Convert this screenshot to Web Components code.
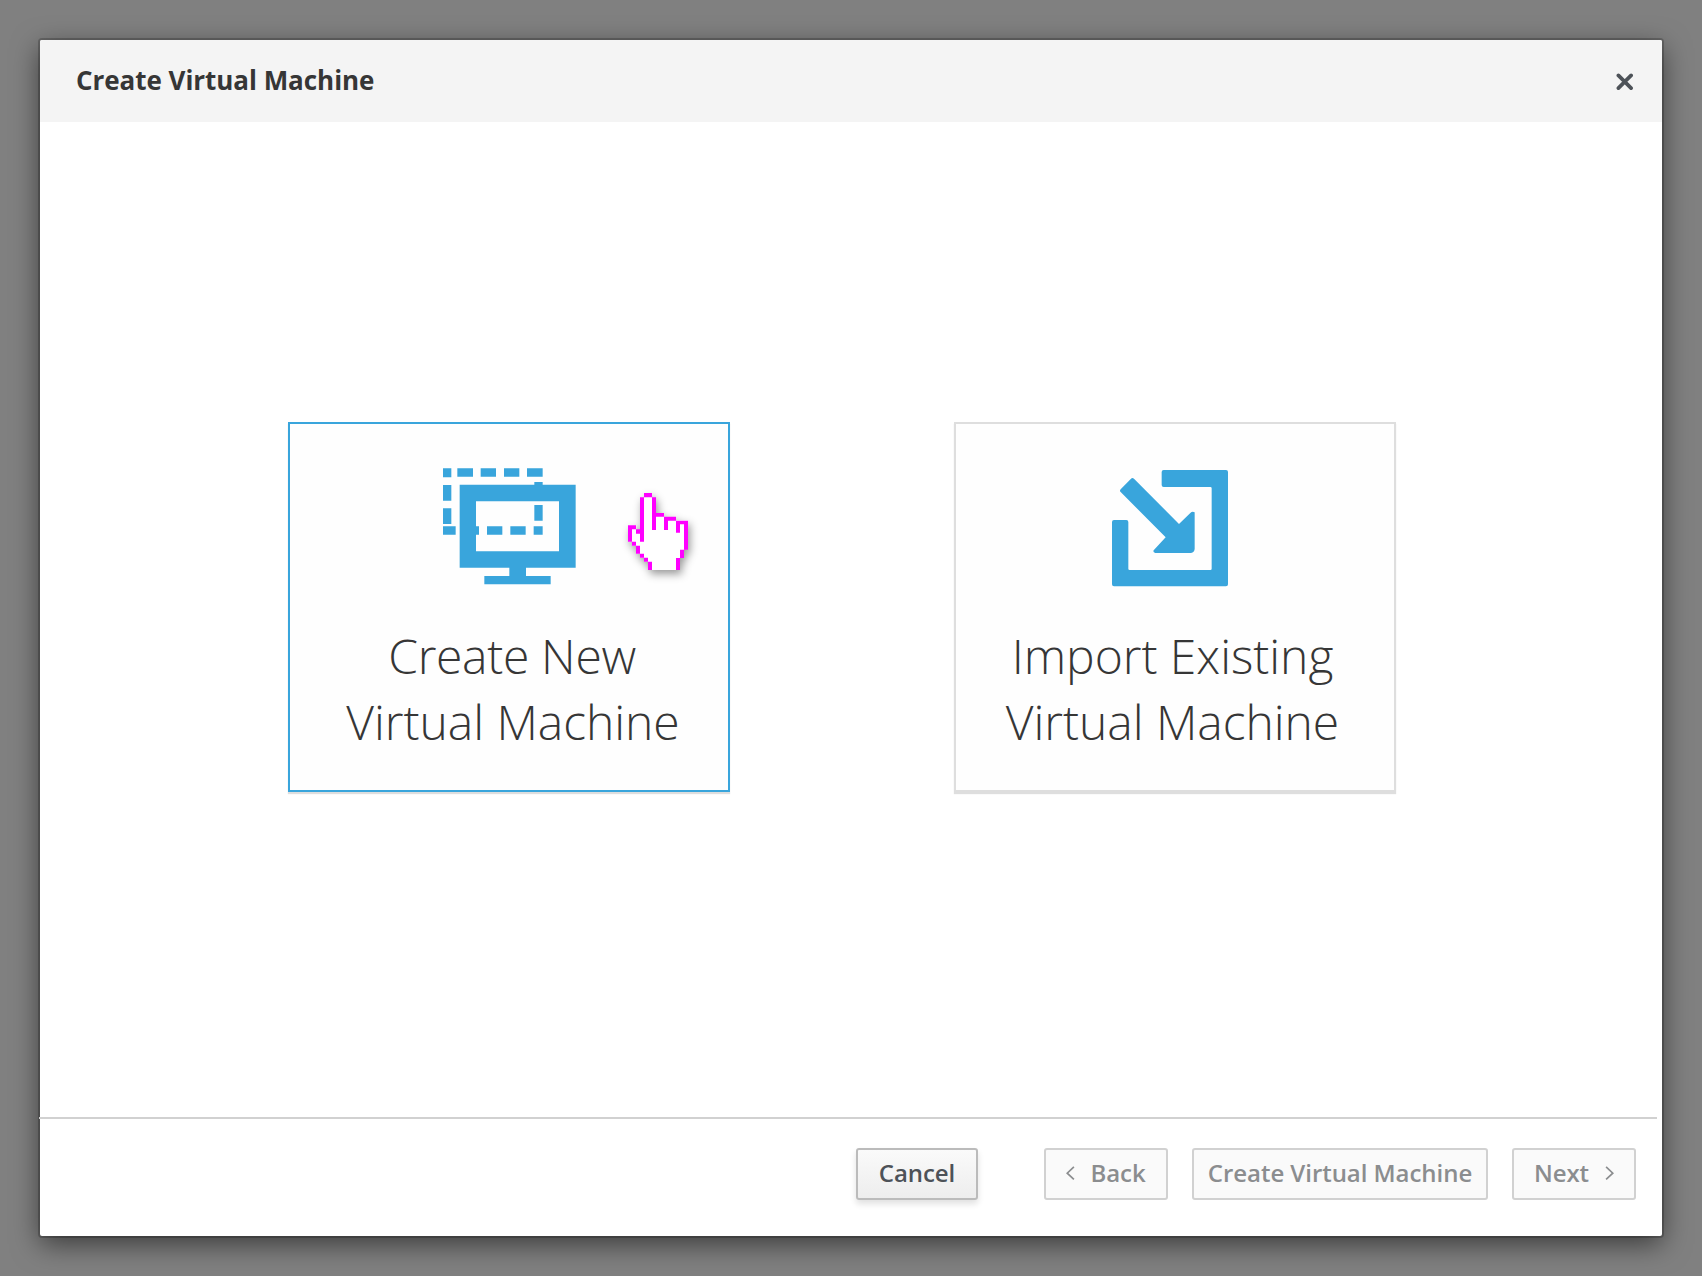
<!DOCTYPE html>
<html lang="en">
<head>
<meta charset="utf-8">
<title>Create Virtual Machine</title>
<style>
html,body{margin:0;height:100%}
body{background:#808080;font-family:"Open Sans","Noto Sans",sans-serif;color:#363636;overflow:hidden}
.tight{letter-spacing:-.32px;margin-right:2px}
</style>
</head>
<body>
<vm-dialog>
  <span slot="title">Create Virtual Machine</span>
  <choice-card class="new" selected>
    <icon-monitor slot="icon"></icon-monitor>
    <span class="tight">Create New</span><span>Virtual Machine</span>
    <hand-cursor slot="overlay"></hand-cursor>
  </choice-card>
  <choice-card class="import">
    <icon-import slot="icon"></icon-import>
    <span>Import Existing</span><span>Virtual Machine</span>
  </choice-card>
  <wizard-button slot="footer" style="--w:122px;--gap:66px">Cancel</wizard-button>
  <wizard-button slot="footer" disabled style="--w:124px;--gap:24px"><chevron-icon></chevron-icon>Back</wizard-button>
  <wizard-button slot="footer" disabled style="--w:296px;--gap:24px">Create Virtual Machine</wizard-button>
  <wizard-button slot="footer" disabled style="--w:124px;--gap:0px">Next<chevron-icon next></chevron-icon></wizard-button>
</vm-dialog>
<script>
const define = (name, html) => customElements.define(name, class extends HTMLElement {
  constructor() {
    super();
    const t = document.createElement('template');
    t.innerHTML = html;
    this.attachShadow({mode: 'open'}).appendChild(t.content.cloneNode(true));
  }
});

define('close-icon', `<style>:host{display:block;padding-top:2px}svg{display:block}</style>
<svg width="18" height="18" viewBox="0 0 18 18"><path d="M2.4 2.4 15.1 15.1M15.1 2.4 2.4 15.1" stroke="#4d5258" stroke-width="3.7" stroke-linecap="round"/></svg>`);

define('chevron-icon', `<style>:host{display:block;margin-right:15px}:host([next]){margin:0 0 0 16px;transform:scaleX(-1)}svg{display:block}</style>
<svg width="9" height="14" viewBox="0 0 9 14"><path d="M7.9 .8 1.2 7.2 7.9 13.4" fill="none" stroke="#8b8d8f" stroke-width="1.7"/></svg>`);

define('icon-monitor', `<style>:host{display:block}svg{display:block}</style>
<svg width="160" height="140" viewBox="0 0 480 420" fill="#39a5dc">
<path fill-rule="evenodd" d="M89 89H437V338H288V363H362V388H163V363H238V338H89ZM138 139V289H387V139Z"/>
<path d="M39 40H64V67H39ZM82 40H129V65H82ZM152 40H198V65H152ZM222 40H268V65H222ZM291 40H338V65H291ZM39 90H64V137H39ZM39 160H64V207H39ZM39 214H77V239H39ZM137 214H147V239H137ZM171 214H217V239H171ZM241 214H287V239H241ZM311 214H338V239H311ZM313 81H338V90H313ZM313 150H338V197H313Z"/></svg>`);

define('icon-import', `<style>:host{display:block}svg{display:block}</style>
<svg width="150" height="140" viewBox="0 0 450 420" fill="#39a5dc">
<path d="M206 45H393Q399 45 399 51V388Q399 394 393 394H57Q51 394 51 388V201Q51 195 57 195H94Q100 195 100 201V341Q100 345 104 345H346Q350 345 350 341V100Q350 96 346 96H206Q200 96 200 90V51Q200 45 206 45Z"/>
<path d="M108 71Q112 67 117 71L252 207 286 174Q292 168 299 172V282Q298 292 288 294H181Q173 292 176 286L212 247 77 111Q73 107 77 103Z"/></svg>`);

define('hand-cursor', `<style>:host{display:block}svg{display:block;overflow:visible;filter:drop-shadow(2px 4px 4px rgba(0,0,0,.4))}</style>
<svg width="90" height="100" viewBox="0 0 270 300">
<path fill="#fff" d="M87 45H111V54H123V100H147V110H183V121H219V208H207V233H195V270H99V245H87V233H75V221H63V197H51V185H40V136H64V150H76V54H87Z"/>
<g fill="#f0f">
<path d="M87 39H111V52H87ZM75 52H87V185H75ZM111 52H123V150H111ZM123 99H147V110H123ZM147 110H159V150H147ZM159 110H183V122H159ZM183 122H219V133H195V158H183ZM207 133H219V209H207ZM195 209H207V234H195ZM183 234H195V270H183Z"/>
<path d="M39 136H63V148H51V185H39ZM63 148H75V161H63ZM51 185H63V197H51ZM63 197H75V221H63ZM75 221H87V233H75ZM87 233H99V245H87ZM99 245H111V270H99Z"/></g></svg>`);

define('choice-card', `<style>
:host{display:flex;flex-direction:column;box-sizing:border-box;position:relative;width:442px;height:370px;padding-top:31px;border:2px solid #dedede;background:#fefefe;box-shadow:0 2px 1px rgba(3,3,3,.13)}
:host([selected]){border-color:#39a5dc}
.icon{padding-left:var(--icon-x)}
.label{display:flex;flex-direction:column;align-items:center;margin-top:28px;padding-left:var(--pl,0);padding-right:var(--pr,0);font-size:48px;font-weight:300;line-height:66px;letter-spacing:-.04px;white-space:nowrap}
.overlay{position:absolute;left:325px;top:56px}
:host(.new){--icon-x:140px;--pl:8px}
:host(.import){--icon-x:139px;--pr:5px}
</style><div class="icon"><slot name="icon"></slot></div><div class="label"><slot></slot></div><div class="overlay"><slot name="overlay"></slot></div>`);

define('wizard-button', `<style>
:host{display:block;margin-right:var(--gap)}
button{display:flex;align-items:center;justify-content:center;box-sizing:border-box;width:var(--w);height:52px;padding:0 0 3px;margin:0;border:2px solid #bbb;border-radius:3px;background:linear-gradient(#fafafa,#ededed);box-shadow:0 4px 6px rgba(3,3,3,.12);font:600 24px "Open Sans","Noto Sans",sans-serif;letter-spacing:-.05px;color:#4d5258;white-space:nowrap}
:host([disabled]) button{background:#fafafa;border-color:#d1d1d1;box-shadow:none;color:#8b8d8f}
</style><button><slot></slot></button>`);

define('vm-dialog', `<style>
:host{display:flex;height:100%;box-sizing:border-box;padding:40px}
.modal{flex:1;display:flex;flex-direction:column;background:#fff;border-radius:2px;box-shadow:0 0 0 2px rgba(0,0,0,.2),0 8px 28px rgba(0,0,0,.55)}
header{display:flex;align-items:center;justify-content:space-between;box-sizing:border-box;height:82px;padding:0 28px 0 36px;background:#f4f4f4;font-size:26px;font-weight:700;letter-spacing:-.04px;border-radius:2px 2px 0 0}
header slot{display:block;padding-bottom:2px}
main{flex:1;display:flex;align-items:flex-start;gap:224px;padding:300px 0 0 248px}
hr{margin:0 5px 0 -1px;border:0;height:2px;background:#d1d1d1}
footer{display:flex;justify-content:flex-end;height:88px;padding:29px 26px 0 0}
</style><section class="modal"><header><slot name="title"></slot><close-icon></close-icon></header><main><slot></slot></main><hr><footer><slot name="footer"></slot></footer></section>`);
</script>
</body>
</html>
